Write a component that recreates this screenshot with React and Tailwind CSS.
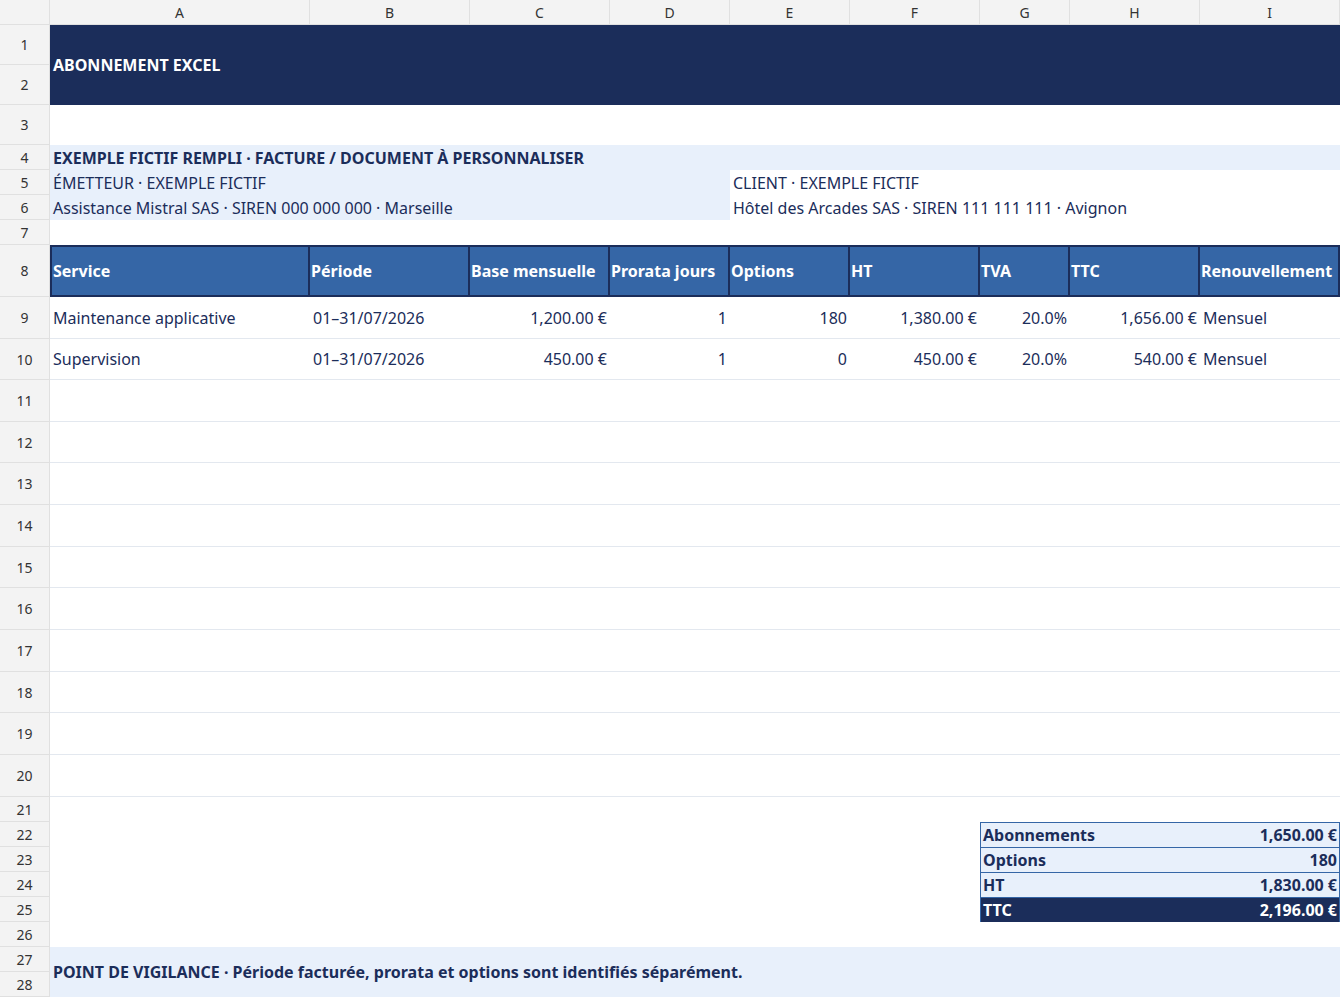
const cols = 'grid grid-cols-[260px_160px_140px_120px_120px_130px_90px_130px_140px]'

const RH = ({ n, h }) => (
  <div className="flex items-center justify-center bg-[#f3f3f3] border-r border-b border-[#e0e0e0] text-[14px] text-[#333] font-['Liberation_Sans',sans-serif]" style={{ height: h }}>
    {n}
  </div>
)

const data = [
  ['Maintenance applicative', '01–31/07/2026', '1,200.00 €', '1', '180', '1,380.00 €', '20.0%', '1,656.00 €', 'Mensuel'],
  ['Supervision', '01–31/07/2026', '450.00 €', '1', '0', '450.00 €', '20.0%', '540.00 €', 'Mensuel'],
]
const heads = ['Service', 'Période', 'Base mensuelle', 'Prorata jours', 'Options', 'HT', 'TVA', 'TTC', 'Renouvellement']
const emptyH = [42, 41, 42, 42, 41, 42, 42, 41, 42, 42]
const summary = [
  ['Abonnements', '1,650.00 €'],
  ['Options', '180'],
  ['HT', '1,830.00 €'],
]

export default function App() {
  const letters = ['A', 'B', 'C', 'D', 'E', 'F', 'G', 'H', 'I']
  return (
    <div className="w-[1340px] h-[997px] overflow-hidden bg-white font-['Lato',sans-serif] text-[16px] text-[#1b2d5a]">
      <div className="flex h-[25px]">
        <div className="w-[50px] bg-[#f3f3f3] border-r border-b border-[#e0e0e0]" />
        <div className={cols}>
          {letters.map((l) => (
            <div key={l} className="flex items-center justify-center bg-[#f3f3f3] border-r border-b border-[#e0e0e0] text-[14px] text-[#333] font-['Liberation_Sans',sans-serif] h-[25px]">{l}</div>
          ))}
        </div>
      </div>
      <div className="flex">
        <div className="w-[50px]"><RH n="1" h={40} /><RH n="2" h={40} /></div>
        <div className="w-[1290px] h-[80px] bg-[#1b2d5a] flex items-center px-[3px] text-white font-bold">ABONNEMENT EXCEL</div>
      </div>
      <div className="flex">
        <div className="w-[50px]"><RH n="3" h={40} /></div>
        <div className="flex-1" />
      </div>
      <div className="flex">
        <div className="w-[50px]"><RH n="4" h={25} /></div>
        <div className="flex-1 bg-[#e8f0fb] flex items-center px-[3px] font-bold">EXEMPLE FICTIF REMPLI · FACTURE / DOCUMENT À PERSONNALISER</div>
      </div>
      <div className="flex">
        <div className="w-[50px]"><RH n="5" h={25} /><RH n="6" h={25} /></div>
        <div className="w-[680px] bg-[#e8f0fb] px-[3px]">
          <div className="h-[25px] flex items-center">ÉMETTEUR · EXEMPLE FICTIF</div>
          <div className="h-[25px] flex items-center">Assistance Mistral SAS · SIREN 000 000 000 · Marseille</div>
        </div>
        <div className="flex-1 px-[3px]">
          <div className="h-[25px] flex items-center">CLIENT · EXEMPLE FICTIF</div>
          <div className="h-[25px] flex items-center">Hôtel des Arcades SAS · SIREN 111 111 111 · Avignon</div>
        </div>
      </div>
      <div className="flex">
        <div className="w-[50px]"><RH n="7" h={25} /></div>
        <div className="flex-1" />
      </div>
      <div className="flex">
        <div className="w-[50px]"><RH n="8" h={52} /></div>
        <div className={cols + ' h-[52px]'}>
          {heads.map((h) => (
            <div key={h} className="bg-[#3566a6] border-[#1b2d5a] border-y-2 border-r-2 first:border-l-2 flex items-center px-[1px] text-white font-bold whitespace-nowrap overflow-hidden">{h}</div>
          ))}
        </div>
      </div>
      {data.map((r, i) => (
        <div key={i} className="flex">
          <div className="w-[50px]"><RH n={String(9 + i)} h={i === 0 ? 42 : 41} /></div>
          <div className={cols + ' border-b border-[#e3e8ef]'}>
            {r.map((c, j) => (
              <div key={j} className={'flex items-center px-[3px] whitespace-nowrap ' + (j >= 2 && j <= 7 ? 'justify-end' : '')}>{c}</div>
            ))}
          </div>
        </div>
      ))}
      {emptyH.map((h, i) => (
        <div key={i} className="flex">
          <div className="w-[50px]"><RH n={String(11 + i)} h={h} /></div>
          <div className="flex-1 border-b border-[#e3e8ef]" />
        </div>
      ))}
      <div className="flex">
        <div className="w-[50px]"><RH n="21" h={25} /></div>
        <div className="flex-1" />
      </div>
      <div className="flex">
        <div className="w-[50px]">
          {['22', '23', '24', '25', '26'].map((n) => <RH key={n} n={n} h={25} />)}
        </div>
        <div className="flex-1 flex justify-end">
          <div className="w-[360px] h-[100px] border border-[#3566a6] flex flex-col font-bold">
            {summary.map(([k, v]) => (
              <div key={k} className="flex-1 bg-[#e8f0fb] border-b border-[#3566a6] flex items-center justify-between px-[2px]">
                <span>{k}</span><span>{v}</span>
              </div>
            ))}
            <div className="flex-1 bg-[#1b2d5a] text-white flex items-center justify-between px-[2px]">
              <span>TTC</span><span>2,196.00 €</span>
            </div>
          </div>
        </div>
      </div>
      <div className="flex">
        <div className="w-[50px]"><RH n="27" h={25} /><RH n="28" h={25} /></div>
        <div className="flex-1 bg-[#e8f0fb] flex items-end pb-[13px] px-[3px] font-bold">POINT DE VIGILANCE · Période facturée, prorata et options sont identifiés séparément.</div>
      </div>
    </div>
  )
}
